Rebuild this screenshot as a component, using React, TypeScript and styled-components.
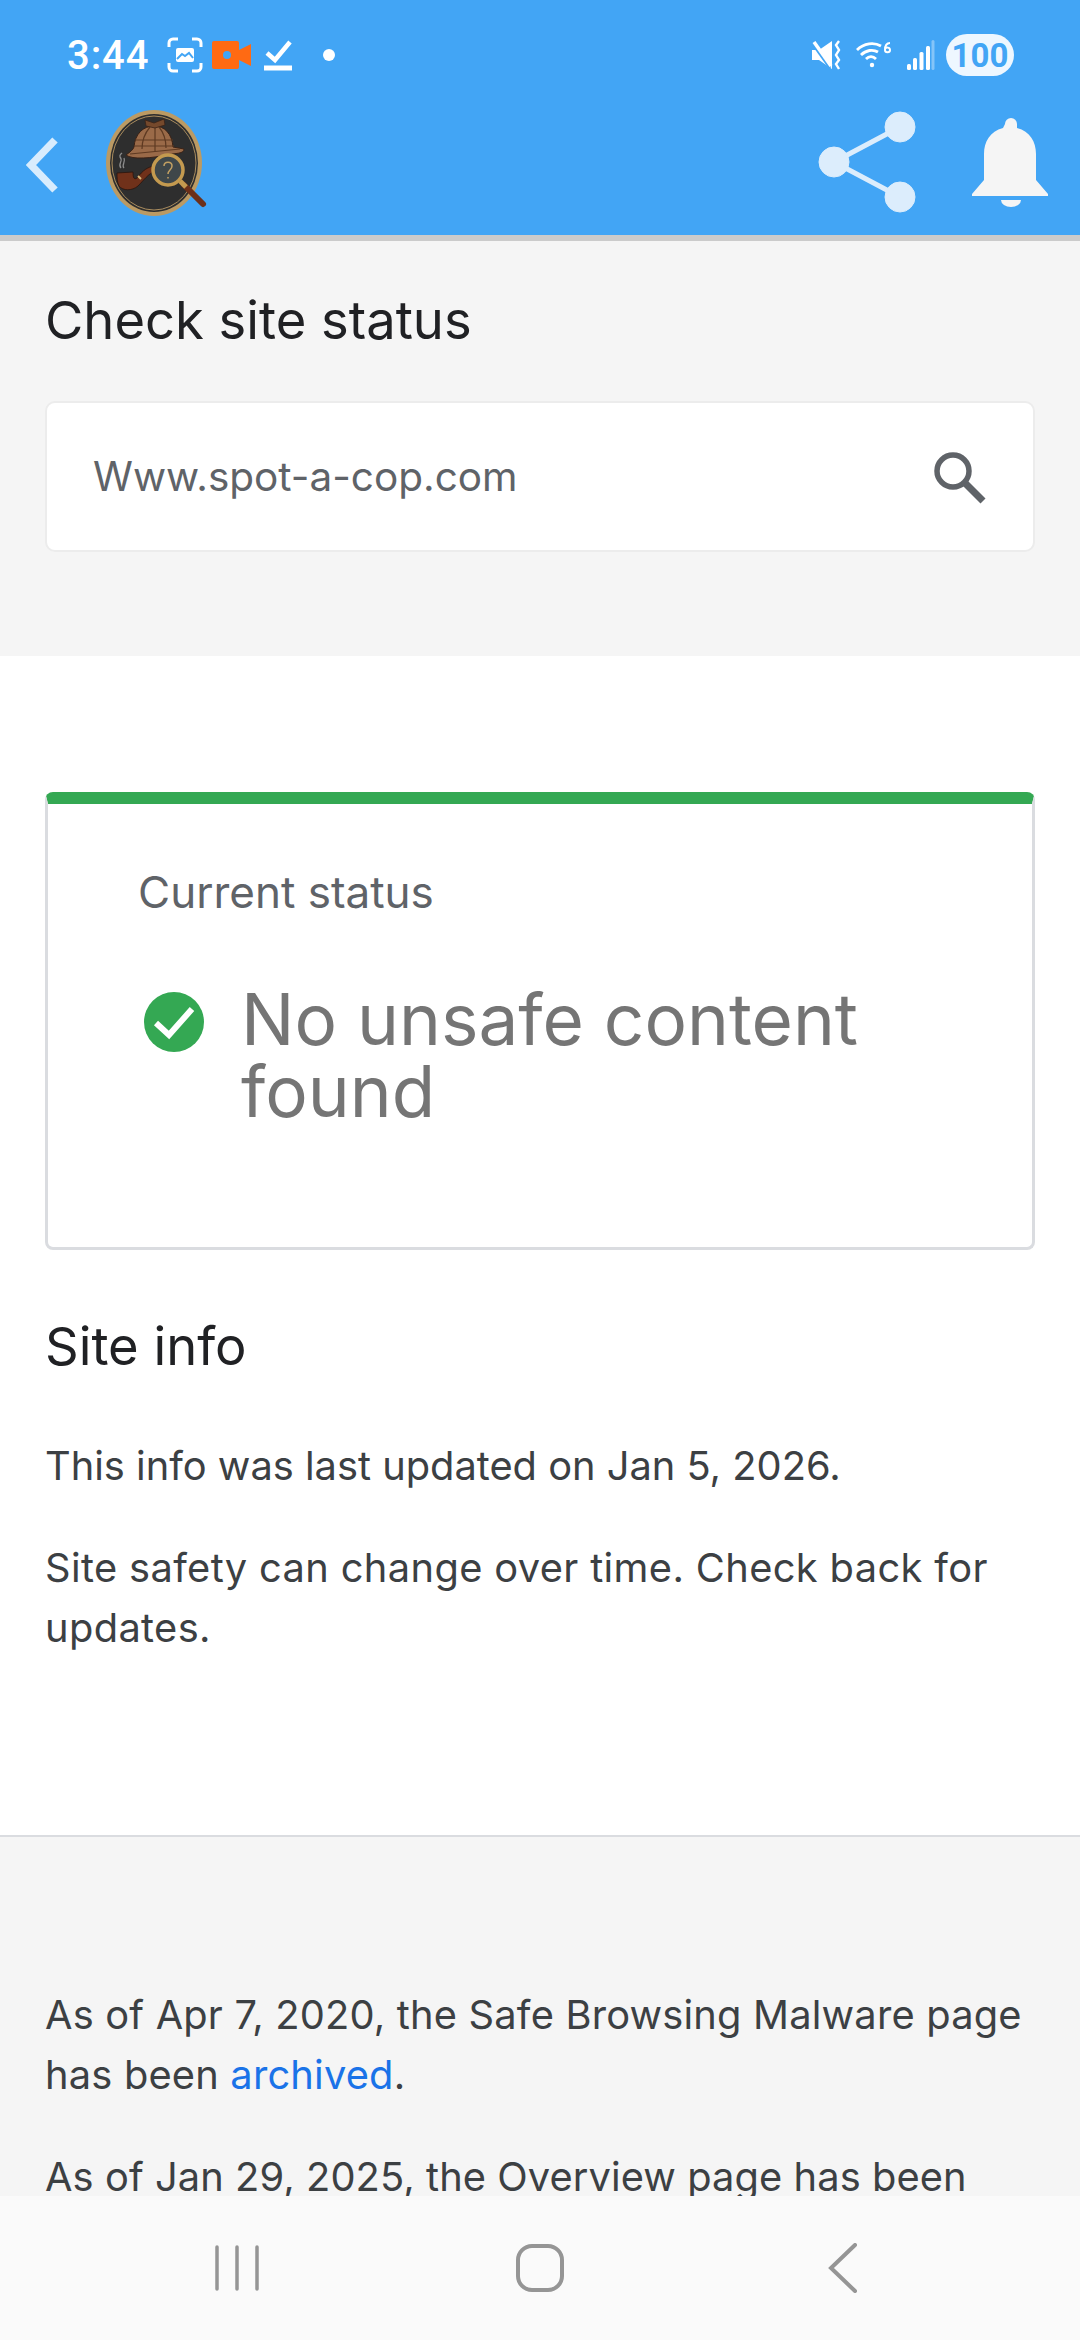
import React from "react";
import styled, { createGlobalStyle } from "styled-components";

const Global = createGlobalStyle`
  html, body { margin: 0; padding: 0; background: #fff; }
  * { box-sizing: border-box; }
  body { font-family: "Inter", "Liberation Sans", sans-serif; }
`;

const Screen = styled.div`
  width: 1080px;
  height: 2340px;
  display: flex;
  flex-direction: column;
  overflow: hidden;
`;

const Header = styled.header`
  flex: none;
  height: 241px;
  background: #42a5f5;
  border-bottom: 6px solid #cbcbcb;
  display: flex;
  flex-direction: column;
`;

const StatusBar = styled.div`
  flex: none;
  height: 110px;
  padding: 0 66px 0 67px;
  display: flex;
  align-items: center;
  color: #fff;
`;

const Time = styled.span`
  font-family: "Roboto", sans-serif;
  font-size: 40px;
  font-weight: 500;
  width: 100px;
  letter-spacing: 0.9px;
`;

const StatusGroup = styled.div`
  display: flex;
  align-items: center;
  gap: 9px;
`;

const Icon = styled.svg<{ $left?: number; $bottom?: number; $top?: number }>`
  flex: none;
  margin-left: ${(p) => p.$left ?? 0}px;
  margin-bottom: ${(p) => p.$bottom ?? 0}px;
  margin-top: ${(p) => p.$top ?? 0}px;
`;

const Spacer = styled.div`
  flex: 1;
`;

const Battery = styled.span`
  width: 68px;
  height: 42px;
  margin-left: 2px;
  border-radius: 21px;
  background: #eef7ff;
  color: #42a5f5;
  font-family: "Roboto", sans-serif;
  font-size: 33px;
  font-weight: 700;
  display: flex;
  align-items: center;
  justify-content: center;
`;

const AppBar = styled.div`
  flex: 1;
  display: flex;
  align-items: center;
  padding: 0 29px 22px 26px;
`;

const SearchSection = styled.section`
  flex: none;
  height: 415px;
  background: #f5f5f5;
  padding: 0 45px;
`;

const PageTitle = styled.h1`
  margin: 0;
  padding-top: 47px;
  height: 160px;
  font-size: 52.5px;
  font-weight: 400;
  line-height: 64px;
  color: #202124;
`;

const SearchBox = styled.div`
  height: 151px;
  background: #fff;
  border: 2px solid #ececec;
  border-radius: 10px;
  padding: 0 46px;
  display: flex;
  align-items: center;
  justify-content: space-between;
`;

const SearchText = styled.span`
  font-size: 40.5px;
  color: #5f6368;
`;

const InfoSection = styled.section`
  flex: none;
  height: 1181px;
  background: #fff;
  padding: 136px 45px 0;
  border-bottom: 2px solid #dadce0;
`;

const Card = styled.div`
  height: 458px;
  border: 3px solid #dadce0;
  border-top: 12px solid #34a853;
  border-radius: 8px;
  padding: 61px 60px 0 90px;
`;

const CardLabel = styled.div`
  font-size: 44px;
  line-height: 54px;
  color: #5f6368;
`;

const StatusRow = styled.div`
  margin-top: 64px;
  display: flex;
  align-items: flex-start;
  gap: 37px;
`;

const StatusText = styled.div`
  font-size: 71px;
  line-height: 72px;
  color: #757575;
`;

const SectionTitle = styled.h2`
  margin: 68px 0 0;
  font-size: 52.5px;
  font-weight: 400;
  line-height: 56px;
  color: #202124;
`;

const Para = styled.p<{ $top: number; $track?: number }>`
  margin: ${(p) => p.$top}px 0 0;
  font-size: 39.8px;
  line-height: 60px;
  letter-spacing: ${(p) => p.$track ?? 0}px;
  color: #3c4043;
`;

const FooterSection = styled.section`
  flex: 1;
  min-height: 0;
  overflow: hidden;
  background: #f5f5f5;
  padding: 148px 45px 0;
`;

const Link = styled.a`
  color: #1a73e8;
  text-decoration: none;
`;

const NavBar = styled.nav`
  flex: none;
  height: 144px;
  background: #fafafa;
  padding: 0 85px;
  display: grid;
  grid-template-columns: 1fr 1fr 1fr;
  align-items: center;
`;

const NavSlot = styled.div`
  display: flex;
  justify-content: center;
`;

const Logo = () => (
  <Icon width="104" height="110" viewBox="0 0 104 110" $left={46}>
    <ellipse cx="48" cy="53" rx="48" ry="53" fill="#bb9a63" />
    <ellipse cx="48" cy="53" rx="44" ry="49" fill="#2e2e2e" />
    <ellipse cx="48" cy="53" rx="42" ry="47" fill="none" stroke="#a98c5e" strokeWidth="1" />
    <path d="M20 45 C24 42 27 40 28 37 C29 24 37 16 48 16 C59 16 66 24 67 37 L78 39 C78 44 70 43 60 45 C47 48 26 50 20 45 Z" fill="#9a6a48" stroke="#3a2216" strokeWidth="1" />
    <path d="M36 39 C36 30 39 23 44 17 M49 41 L49 16 M60 38 C60 30 58 23 53 17 M29 30 L67 30 M28 36 L68 36 M24 44 L74 39" stroke="#5e3a22" strokeWidth="1.2" fill="none" />
    <path d="M39 10 L48 13 L58 9 L59 15 L49 18 L40 16 Z" fill="#75492c" stroke="#3a2216" strokeWidth="0.8" />
    <path d="M15 58 C11 54 18 51 14 47 C13 45 15 44 16 43 M18 58 C15 55 20 52 18 48" stroke="#8d8d8d" strokeWidth="1.3" fill="none" />
    <path d="M11 63 L27 62 C27 68 28 70 31 68 C37 60 42 57 48 56 L49 61 C42 64 38 70 32 76 C26 81 17 81 13 76 C11 72 11 68 11 63 Z" fill="#70311a" stroke="#2a140c" strokeWidth="0.8" />
    <path d="M32 66 L35 69" stroke="#d6b677" strokeWidth="2" />
    <path d="M78 75 L97 94" stroke="#6c2f19" strokeWidth="6" strokeLinecap="round" />
    <path d="M74 71 L80 77" stroke="#c49a4f" strokeWidth="5" />
    <circle cx="62" cy="60" r="15" fill="#3f474a" stroke="#c49a4f" strokeWidth="3.5" />
    <path d="M58 56 C58 51 66 51 66 56 C66 60 62 60 62 64 M62 67 L62 68.5" stroke="#c2a063" strokeWidth="1.5" fill="none" />
  </Icon>
);

export default function App() {
  return (
    <Screen>
      <Global />
      <Header>
        <StatusBar>
          <Time>3:44</Time>
          <StatusGroup>
            <Icon width="36" height="36" viewBox="0 0 36 36" fill="none" stroke="#fff" strokeWidth="3">
              <path d="M2 10V6a4 4 0 0 1 4-4h5M25 2h5a4 4 0 0 1 4 4v4M34 26v4a4 4 0 0 1-4 4h-5M11 34H6a4 4 0 0 1-4-4v-4" />
              <path d="M9 13a2 2 0 0 1 2-2h14a2 2 0 0 1 2 2v10a2 2 0 0 1-2 2H11a2 2 0 0 1-2-2z" fill="#fff" stroke="none" />
              <path d="M10 22l5-5 3 2 4-3 4 5" stroke="#42a5f5" strokeWidth="2" />
            </Icon>
            <Icon width="39" height="28" viewBox="0 0 39 28">
              <path d="M2 0h23a2 2 0 0 1 2 2v7l12-6v22l-12-6v7a2 2 0 0 1-2 2H2a2 2 0 0 1-2-2V2a2 2 0 0 1 2-2z" fill="#ff6a13" />
              <circle cx="15" cy="14" r="4" fill="#42a5f5" />
            </Icon>
            <Icon width="28" height="34" viewBox="0 0 28 34" $left={4} fill="none" stroke="#fff">
              <path d="M3 15l8 7L26 4" strokeWidth="4.5" />
              <path d="M0 30h28" strokeWidth="5" />
            </Icon>
            <Icon width="12" height="12" viewBox="0 0 12 12" $left={22}>
              <circle cx="6" cy="6" r="6" fill="#fff" />
            </Icon>
          </StatusGroup>
          <Spacer />
          <StatusGroup>
            <Icon width="31" height="30" viewBox="0 0 31 30" fill="none">
              <path d="M0 10h7L20 1v28L7 20H0z" fill="#fff" />
              <path d="M1 4l17 24" stroke="#42a5f5" strokeWidth="3" />
              <path d="M2 2l17 24" stroke="#fff" strokeWidth="3.5" />
              <path d="M27 1l-3 4 3 5-3 5 3 5-3 4 3 5" stroke="#fff" strokeWidth="2.4" />
            </Icon>
            <Icon width="36" height="28" viewBox="0 0 36 28" fill="none" stroke="#fff" strokeWidth="2.8" $left={4}>
              <path d="M1 9 C8 2 18 1 25 5 M5 14 C10 9 17 8 22 11 M10 18 C13 15 17 15 20 18" />
              <circle cx="16" cy="24" r="2.2" fill="#fff" stroke="none" />
              <path d="M34 2 C30 2 29 6 29 9 C29 12 34 12 34 9 C34 6 30 6 29 8" strokeWidth="2" />
            </Icon>
            <Icon width="28" height="30" viewBox="0 0 28 30" $left={6} fill="#fff">
              <rect x="0" y="24" width="4" height="6" rx="1.5" />
              <rect x="6" y="18" width="4" height="12" rx="1.5" />
              <rect x="12.5" y="12" width="4" height="18" rx="1.5" />
              <rect x="19" y="6" width="4" height="24" rx="1.5" />
              <rect x="24.5" y="0" width="3" height="30" rx="1.5" opacity="0.35" />
            </Icon>
            <Battery>100</Battery>
          </StatusGroup>
        </StatusBar>
        <AppBar>
          <Icon width="34" height="56" viewBox="0 0 34 56" fill="none" stroke="#d8ecfd" strokeWidth="7.5">
            <path d="M29 3 L5 28 L29 53" />
          </Icon>
          <Logo />
          <Spacer />
          <Icon width="100" height="104" viewBox="0 0 100 104" fill="#dcedfc" stroke="#dcedfc" $bottom={6}>
            <circle cx="17" cy="52" r="15" />
            <circle cx="83" cy="17" r="15" />
            <circle cx="83" cy="87" r="15" />
            <path d="M17 52 L83 17 M17 52 L83 87" strokeWidth="5" fill="none" />
          </Icon>
          <Icon width="80" height="92" viewBox="0 0 80 92" fill="#f5f5f5" $left={54} $bottom={6}>
            <path d="M34 8a6 6 0 0 1 12 0v4c13 3 19 14 19 26v26l12 14v2H1v-2l12-14V38c0-12 6-23 19-26z" />
            <path d="M30 84h20a10 7 0 0 1-20 0z" />
          </Icon>
        </AppBar>
      </Header>

      <SearchSection>
        <PageTitle>Check site status</PageTitle>
        <SearchBox>
          <SearchText>Www.spot-a-cop.com</SearchText>
          <Icon width="56" height="56" viewBox="0 0 56 56" fill="none" stroke="#5f6368">
            <circle cx="22" cy="22" r="16" strokeWidth="5.5" />
            <path d="M34 34 L52 52" strokeWidth="7" />
          </Icon>
        </SearchBox>
      </SearchSection>

      <InfoSection>
        <Card>
          <CardLabel>Current status</CardLabel>
          <StatusRow>
            <Icon width="60" height="60" viewBox="0 0 60 60" $left={6} $top={9}>
              <circle cx="30" cy="30" r="30" fill="#34a853" />
              <path d="M12 31 L25 43 L48 17" fill="none" stroke="#fff" strokeWidth="6" />
            </Icon>
            <StatusText>No unsafe content found</StatusText>
          </StatusRow>
        </Card>
        <SectionTitle>Site info</SectionTitle>
        <Para $top={62}>This info was last updated on Jan 5, 2026.</Para>
        <Para $top={42} $track={0.37}>Site safety can change over time. Check back for updates.</Para>
      </InfoSection>

      <FooterSection>
        <Para $top={0} $track={0.2}>
          As of Apr 7, 2020, the Safe Browsing Malware page has been <Link>archived</Link>.
        </Para>
        <Para $top={42} $track={0.09}>As of Jan 29, 2025, the Overview page has been archived.</Para>
      </FooterSection>

      <NavBar>
        <NavSlot>
          <svg width="44" height="46" viewBox="0 0 44 46" stroke="#959595" strokeWidth="3.5" strokeLinecap="round">
            <path d="M2 2V44M22 2V44M42 2V44" />
          </svg>
        </NavSlot>
        <NavSlot>
          <svg width="48" height="48" viewBox="0 0 48 48" fill="none" stroke="#959595" strokeWidth="4">
            <rect x="2" y="2" width="44" height="44" rx="14" />
          </svg>
        </NavSlot>
        <NavSlot>
          <svg width="30" height="50" viewBox="0 0 30 50" fill="none" stroke="#959595" strokeWidth="4" strokeLinecap="round">
            <path d="M27 2 L3 25 L27 48" />
          </svg>
        </NavSlot>
      </NavBar>
    </Screen>
  );
}
